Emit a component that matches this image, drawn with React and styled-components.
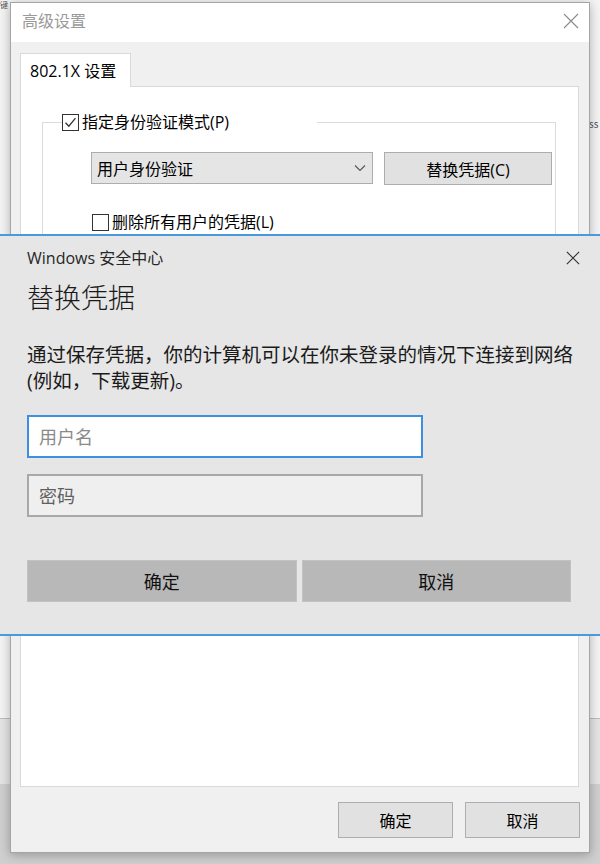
import React from 'react';
import styled, { createGlobalStyle } from 'styled-components';

const GlobalStyle = createGlobalStyle`
  html, body {
    margin: 0;
    padding: 0;
  }
  body {
    font-family: "Noto Sans CJK SC", sans-serif;
  }
`;

const font = `"Open Sans", "Noto Sans CJK SC", sans-serif`;

const Desktop = styled.div`
  position: relative;
  width: 600px;
  height: 864px;
  overflow: hidden;
  font-family: ${font};
  color: #000;
  background: linear-gradient(
    to bottom,
    #f4f4f4 0,
    #f4f4f4 718px,
    #bdbdbd 718px,
    #bdbdbd 719px,
    #e4e4e4 719px,
    #e4e4e4 784px,
    #cfcfcf 784px
  );
`;

const BgText = styled.span`
  position: absolute;
  left: ${p => p.$x}px;
  top: ${p => p.$y}px;
  font-family: "Noto Sans CJK SC", sans-serif;
  font-size: ${p => p.$size}px;
  line-height: 1;
  color: #555;
`;

const Window = styled.div`
  position: absolute;
  left: 10px;
  top: 2px;
  width: 580px;
  height: 851px;
  box-sizing: border-box;
  display: flex;
  flex-direction: column;
  background: #f0f0f0;
  border: 1px solid #a5a5a5;
  box-shadow: 0 2px 10px rgba(0, 0, 0, 0.28);
`;

const TitleBar = styled.div`
  height: 39px;
  flex: none;
  box-sizing: border-box;
  display: flex;
  align-items: center;
  justify-content: space-between;
  padding: 0 10px 4px 11px;
  background: #fff;
`;

const WindowTitle = styled.span`
  font-size: 16px;
  line-height: 20px;
  color: #9a9a9a;
`;

const WindowBody = styled.div`
  flex: 1;
  display: flex;
  flex-direction: column;
  padding: 11px 10px 0 9px;
`;

const TabStrip = styled.div`
  display: flex;
`;

const Tab = styled.div`
  position: relative;
  z-index: 1;
  width: 111px;
  height: 34px;
  box-sizing: border-box;
  padding: 0 0 2px 9px;
  display: flex;
  align-items: center;
  font-size: 16px;
  background: #fff;
  border: 1px solid #d9d9d9;
  border-bottom: none;
  margin-bottom: -1px;
`;

const TabPanel = styled.div`
  height: 701px;
  box-sizing: border-box;
  background: #fff;
  border: 1px solid #d9d9d9;
  padding: 25px 22px 0 21px;
`;

const GroupBox = styled.fieldset`
  margin: 0;
  padding: 0;
  height: 380px;
  border: 1px solid #dcdcdc;
  box-sizing: border-box;
  min-width: 0;
`;

const Legend = styled.legend`
  width: 255px;
  margin-left: 19px;
  padding: 0;
  height: 20px;
  display: flex;
  align-items: center;
  gap: 3px;
  font-size: 16px;
  line-height: 20px;
`;

const GroupContent = styled.div`
  padding: 20px 0 0 48px;
`;

const Box = styled.span`
  width: 17px;
  height: 17px;
  box-sizing: border-box;
  border: 1px solid #333;
  background: #fff;
  display: inline-flex;
  align-items: center;
  justify-content: center;
  flex: none;
`;

const ControlRow = styled.div`
  display: flex;
  gap: 11px;
`;

const Select = styled.div`
  width: 282px;
  height: 32px;
  box-sizing: border-box;
  display: flex;
  align-items: center;
  justify-content: space-between;
  padding: 0 6px 0 5px;
  background: #e5e5e5;
  border: 1px solid #adadad;
  font-size: 16px;
`;

const Button = styled.button`
  width: ${p => p.$w}px;
  height: ${p => p.$h}px;
  box-sizing: border-box;
  margin: 0;
  padding: 0;
  background: #e1e1e1;
  border: 1px solid #adadad;
  font-family: ${font};
  font-size: 16px;
  color: #000;
`;

const CheckRow = styled.label`
  display: flex;
  align-items: center;
  gap: 3px;
  margin-top: 27px;
  margin-left: 1px;
  font-size: 16px;
  line-height: 20px;
`;

const Footer = styled.div`
  display: flex;
  justify-content: flex-end;
  gap: 12px;
  padding: 15px 0 0 0;
  margin-right: -1px;
`;

const Dialog = styled.div`
  position: absolute;
  left: 0;
  top: 234px;
  width: 600px;
  height: 402px;
  box-sizing: border-box;
  display: flex;
  flex-direction: column;
  padding: 10px 29px 0 27px;
  background: #e6e6e6;
  border-top: 2px solid #4a99df;
  border-bottom: 2px solid #4a99df;
`;

const DialogHeader = styled.div`
  height: 24px;
  display: flex;
  align-items: center;
  justify-content: space-between;
  margin-right: -9px;
`;

const DialogCaption = styled.span`
  font-size: 16px;
  line-height: 24px;
  color: #262626;
`;

const Heading = styled.h1`
  margin: 10px 0 0;
  font-size: 27px;
  line-height: 36px;
  font-weight: 300;
  color: #1a1a1a;
`;

const Message = styled.p`
  margin: 26px 0 0;
  font-size: 19.5px;
  line-height: 26px;
  color: #1a1a1a;
  white-space: nowrap;
`;

const Field = styled.input`
  display: block;
  width: 396px;
  height: 43px;
  box-sizing: border-box;
  margin: ${p => p.$top}px 0 0;
  padding: 0 10px;
  font-family: ${font};
  font-size: 18px;
  outline: none;
  background: ${p => (p.$focused ? '#fff' : '#efefef')};
  border: 2px solid ${p => (p.$focused ? '#3f8fe0' : '#a8a8a8')};

  &::placeholder {
    color: ${p => (p.$focused ? '#8a8a8a' : '#5f5f5f')};
  }
`;

const DialogButtons = styled.div`
  display: flex;
  gap: 5px;
  margin-top: 43px;
`;

const DialogButton = styled.button`
  flex: 1;
  height: 42px;
  margin: 0;
  background: #b8b8b8;
  border: 1px solid #c2c2c2;
  font-family: ${font};
  font-size: 18px;
  color: #111;
`;

const CloseIcon = ({ size, color, weight }) => (
  <svg width={size} height={size} viewBox="0 0 16 16">
    <path d="M1 1 L15 15 M15 1 L1 15" stroke={color} strokeWidth={weight} fill="none" />
  </svg>
);

const Check = ({ checked }) => (
  <Box>
    {checked ? (
      <svg width="13" height="13" viewBox="0 0 13 13">
        <path d="M1.5 6.8 L4.8 10.2 L11.5 2.2" stroke="#333" strokeWidth="1.3" fill="none" />
      </svg>
    ) : null}
  </Box>
);

const App = () => {
  return (
    <Desktop>
      <GlobalStyle />
      <BgText $x={0} $y={1} $size={8}>键</BgText>
      <BgText $x={589} $y={119} $size={10}>ss</BgText>

      <Window>
        <TitleBar>
          <WindowTitle>高级设置</WindowTitle>
          <CloseIcon size={16} color="#8a8a8a" weight={1.1} />
        </TitleBar>
        <WindowBody>
          <TabStrip>
            <Tab>802.1X 设置</Tab>
          </TabStrip>
          <TabPanel>
            <GroupBox>
              <Legend>
                <Check checked />
                指定身份验证模式(P)
              </Legend>
              <GroupContent>
                <ControlRow>
                  <Select>
                    <span>用户身份验证</span>
                    <svg width="12" height="8" viewBox="0 0 12 8">
                      <path d="M1 1.5 L6 6.5 L11 1.5" stroke="#555" strokeWidth="1.1" fill="none" />
                    </svg>
                  </Select>
                  <Button $w={168} $h={33}>替换凭据(C)</Button>
                </ControlRow>
                <CheckRow>
                  <Check />
                  删除所有用户的凭据(L)
                </CheckRow>
              </GroupContent>
            </GroupBox>
          </TabPanel>
          <Footer>
            <Button $w={115} $h={36}>确定</Button>
            <Button $w={115} $h={36}>取消</Button>
          </Footer>
        </WindowBody>
      </Window>

      <Dialog>
        <DialogHeader>
          <DialogCaption>Windows 安全中心</DialogCaption>
          <CloseIcon size={14} color="#333" weight={1.3} />
        </DialogHeader>
        <Heading>替换凭据</Heading>
        <Message>
          通过保存凭据，你的计算机可以在你未登录的情况下连接到网络
          <br />
          (例如，下载更新)。
        </Message>
        <Field $top={21} $focused placeholder="用户名" />
        <Field $top={16} placeholder="密码" />
        <DialogButtons>
          <DialogButton>确定</DialogButton>
          <DialogButton>取消</DialogButton>
        </DialogButtons>
      </Dialog>
    </Desktop>
  );
};

export default App;
